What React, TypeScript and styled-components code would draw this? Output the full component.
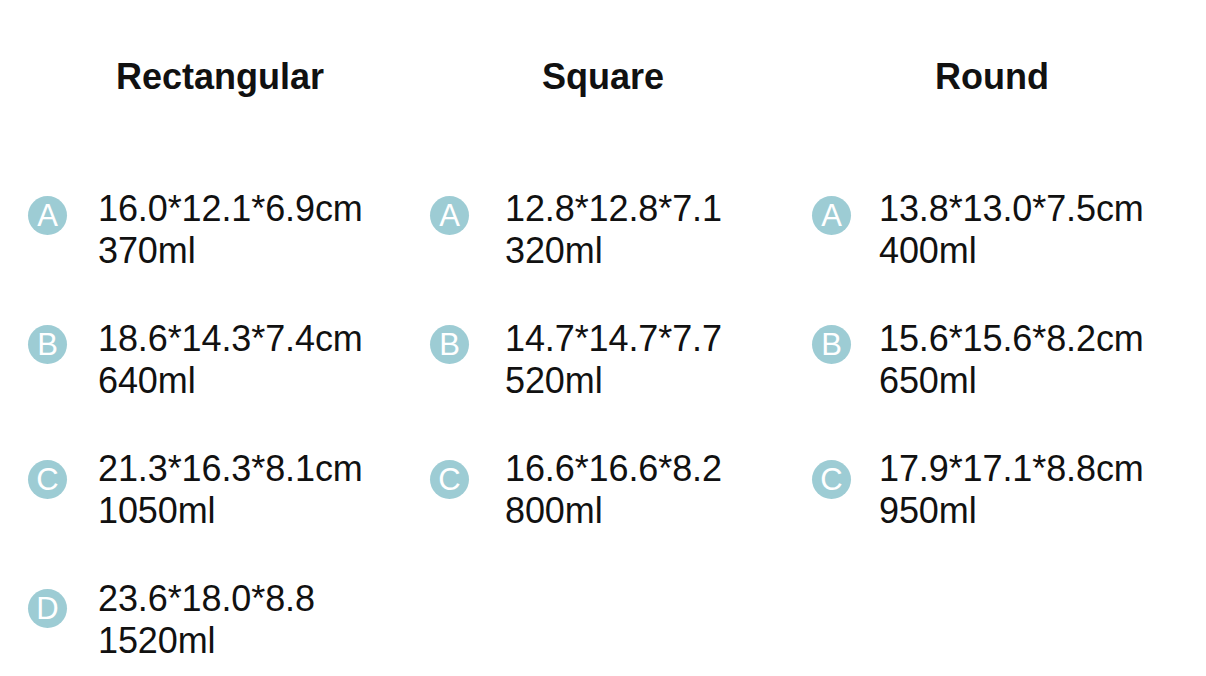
import React from 'react';
import styled, { createGlobalStyle } from 'styled-components';

const GlobalStyle = createGlobalStyle`
  html, body {
    margin: 0;
    padding: 0;
    background: #ffffff;
  }
  body {
    font-family: "Liberation Sans", Arial, sans-serif;
    color: #111111;
  }
`;

type Item = { letter: string; size: string; volume: string; drop: number };
type Column = { title: string; indent: number; width: number; gap: number; items: Item[] };

const columns: Column[] = [
  {
    title: 'Rectangular',
    indent: 88,
    width: 402,
    gap: 31,
    items: [
      { letter: 'A', size: '16.0*12.1*6.9cm', volume: '370ml', drop: 8 },
      { letter: 'B', size: '18.6*14.3*7.4cm', volume: '640ml', drop: 7 },
      { letter: 'C', size: '21.3*16.3*8.1cm', volume: '1050ml', drop: 12 },
      { letter: 'D', size: '23.6*18.0*8.8', volume: '1520ml', drop: 11 },
    ],
  },
  {
    title: 'Square',
    indent: 112,
    width: 382,
    gap: 36,
    items: [
      { letter: 'A', size: '12.8*12.8*7.1', volume: '320ml', drop: 8 },
      { letter: 'B', size: '14.7*14.7*7.7', volume: '520ml', drop: 7 },
      { letter: 'C', size: '16.6*16.6*8.2', volume: '800ml', drop: 12 },
    ],
  },
  {
    title: 'Round',
    indent: 123,
    width: 360,
    gap: 28,
    items: [
      { letter: 'A', size: '13.8*13.0*7.5cm', volume: '400ml', drop: 8 },
      { letter: 'B', size: '15.6*15.6*8.2cm', volume: '650ml', drop: 7 },
      { letter: 'C', size: '17.9*17.1*8.8cm', volume: '950ml', drop: 12 },
    ],
  },
];

const App = () => {
  return (
    <>
      <GlobalStyle />
      <Page>
        {columns.map((col) => (
          <Col key={col.title} $width={col.width}>
            <Heading $indent={col.indent}>{col.title}</Heading>
            <List>
              {col.items.map((it) => (
                <Row key={it.letter} $gap={col.gap}>
                  <Badge $drop={it.drop}>{it.letter}</Badge>
                  <Text>
                    <Line>{it.size}</Line>
                    <Line>{it.volume}</Line>
                  </Text>
                </Row>
              ))}
            </List>
          </Col>
        ))}
      </Page>
    </>
  );
};

const Page = styled.div`
  display: flex;
  align-items: flex-start;
  width: 1206px;
  height: 676px;
  box-sizing: border-box;
  padding: 56px 0 0 28px;
  overflow: hidden;
`;

const Col = styled.div<{ $width: number }>`
  display: flex;
  flex-direction: column;
  width: ${(p) => p.$width}px;
  flex-shrink: 0;
`;

const Heading = styled.div<{ $indent: number }>`
  padding-left: ${(p) => p.$indent}px;
  font-size: 36px;
  font-weight: 700;
  line-height: 42px;
  white-space: nowrap;
`;

const List = styled.div`
  display: flex;
  flex-direction: column;
  gap: 46px;
  margin-top: 90px;
`;

const Row = styled.div<{ $gap: number }>`
  display: flex;
  align-items: flex-start;
  gap: ${(p) => p.$gap}px;
`;

const Badge = styled.div<{ $drop: number }>`
  width: 39px;
  height: 39px;
  margin-top: ${(p) => p.$drop}px;
  border-radius: 50%;
  background: #9dccd4;
  color: #ffffff;
  display: flex;
  align-items: center;
  justify-content: center;
  font-size: 31px;
  font-weight: 400;
  line-height: 1;
  flex-shrink: 0;
`;

const Text = styled.div`
  display: flex;
  flex-direction: column;
`;

const Line = styled.div`
  font-size: 36px;
  line-height: 42px;
  white-space: nowrap;
  letter-spacing: -0.1px;
`;

export default App;
